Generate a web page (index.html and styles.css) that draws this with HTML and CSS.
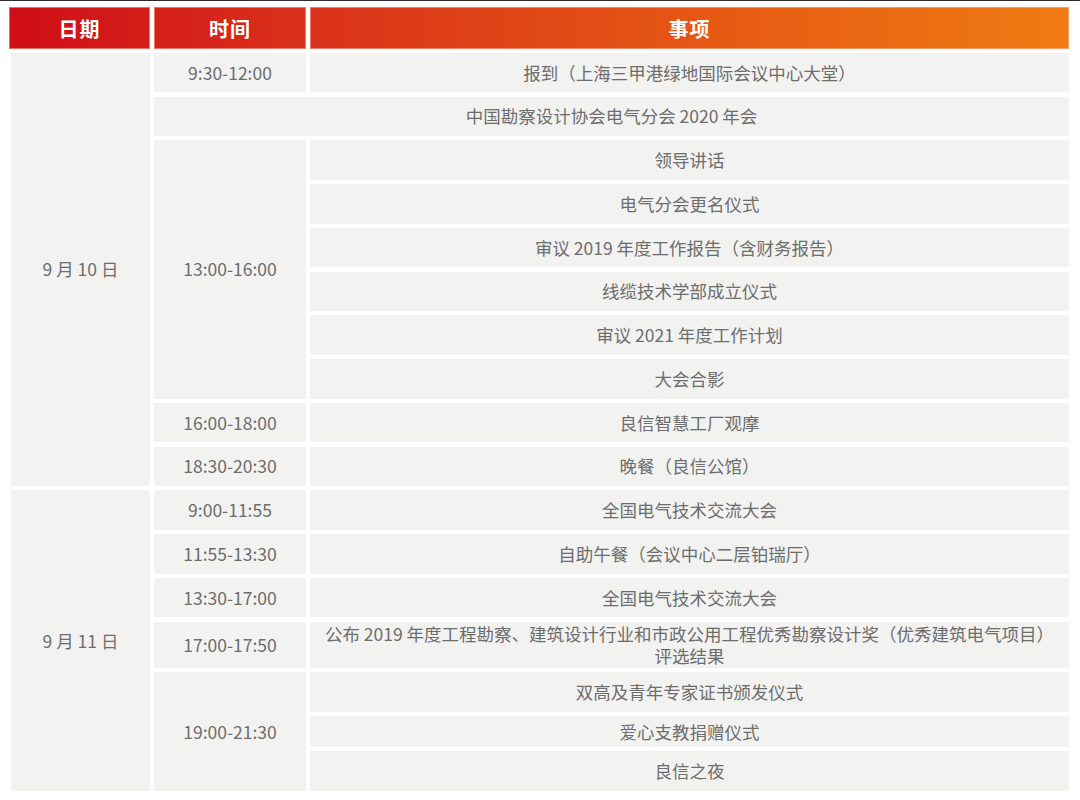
FILE: index.html
```html
<!DOCTYPE html>
<html lang="zh">
<head>
<meta charset="utf-8">
<title>日程</title>
<link rel="stylesheet" href="styles.css">
</head>
<body>
<div class="topline"></div>
<div class="sheet">
  <div class="schedule">
    <div class="hd">日期</div>
    <div class="hd">时间</div>
    <div class="hd">事项</div>

    <div class="cell date d1">9 月 10 日</div>
    <div class="cell time r1">9:30-12:00</div>
    <div class="cell ev r1">报到（上海三甲港绿地国际会议中心大堂）</div>
    <div class="cell wide r2">中国勘察设计协会电气分会 2020 年会</div>
    <div class="cell time r3-8">13:00-16:00</div>
    <div class="cell ev r3">领导讲话</div>
    <div class="cell ev r4">电气分会更名仪式</div>
    <div class="cell ev r5">审议 2019 年度工作报告（含财务报告）</div>
    <div class="cell ev r6">线缆技术学部成立仪式</div>
    <div class="cell ev r7">审议 2021 年度工作计划</div>
    <div class="cell ev r8">大会合影</div>
    <div class="cell time r9">16:00-18:00</div>
    <div class="cell ev r9">良信智慧工厂观摩</div>
    <div class="cell time r10">18:30-20:30</div>
    <div class="cell ev r10">晚餐（良信公馆）</div>

    <div class="cell date d2">9 月 11 日</div>
    <div class="cell time r11">9:00-11:55</div>
    <div class="cell ev r11">全国电气技术交流大会</div>
    <div class="cell time r12">11:55-13:30</div>
    <div class="cell ev r12">自助午餐（会议中心二层铂瑞厅）</div>
    <div class="cell time r13">13:30-17:00</div>
    <div class="cell ev r13">全国电气技术交流大会</div>
    <div class="cell time r14">17:00-17:50</div>
    <div class="cell ev r14 two"><span class="line">公布 2019 年度工程勘察、建筑设计行业和市政公用工程优秀勘察设计奖（优秀建筑电气项目）</span><span class="line">评选结果</span></div>
    <div class="cell time r15-17">19:00-21:30</div>
    <div class="cell ev r15">双高及青年专家证书颁发仪式</div>
    <div class="cell ev r16">爱心支教捐赠仪式</div>
    <div class="cell ev r17">良信之夜</div>
  </div>
</div>
</body>
</html>
```

FILE: styles.css
```css
html, body {
  margin: 0;
  padding: 0;
  background: #ffffff;
}

body {
  font-family: "Noto Sans CJK SC", "Noto Sans", sans-serif;
}

.topline {
  height: 1px;
  background: #2c2c2c;
}

.sheet {
  padding: 6px 11px 0 9px;
}

.schedule {
  display: grid;
  grid-template-columns: 141px 152px 759px;
  grid-template-rows: 41.5px repeat(13, 39.5px) 46.5px 39.5px 31px 40px;
  column-gap: 4px;
  row-gap: 4.25px;
}

.hd {
  display: flex;
  align-items: center;
  justify-content: center;
  color: #ffffff;
  font-size: 20px;
  font-weight: 700;
  letter-spacing: 1px;
  background: linear-gradient(90deg, #cf0c17 0%, #d9301a 28%, #e45514 62%, #f07c12 100%);
  background-attachment: fixed;
  box-shadow: inset 0 0 0 1px rgba(255, 190, 170, 0.55);
  margin-bottom: -0.75px;
}

.cell {
  display: flex;
  align-items: center;
  justify-content: center;
  text-align: center;
  background: #f2f2f1;
  color: #6d6d6d;
  font-size: 17.5px;
  line-height: 21px;
  padding-bottom: 1px;
}

.date { grid-column: 1; margin-left: 2px; }
.time { grid-column: 2; }
.ev { grid-column: 3; padding-left: 6px; padding-right: 6px; }
.wide { grid-column: 2 / 4; }

.two {
  flex-direction: column;
  gap: 0;
  padding-bottom: 0;
}

.two .line {
  display: block;
  line-height: 21.5px;
  height: 21.5px;
}

.d1 { grid-row: 2 / 12; }
.d2 { grid-row: 12 / 19; }

.r1 { grid-row: 2; }
.r2 { grid-row: 3; }
.r3 { grid-row: 4; }
.r3-8 { grid-row: 4 / 10; }
.r4 { grid-row: 5; }
.r5 { grid-row: 6; }
.r6 { grid-row: 7; }
.r7 { grid-row: 8; }
.r8 { grid-row: 9; }
.r9 { grid-row: 10; }
.r10 { grid-row: 11; }
.r11 { grid-row: 12; }
.r12 { grid-row: 13; }
.r13 { grid-row: 14; }
.r14 { grid-row: 15; }
.r15 { grid-row: 16; }
.r15-17 { grid-row: 16 / 19; }
.r16 { grid-row: 17; }
.r17 { grid-row: 18; }
```
